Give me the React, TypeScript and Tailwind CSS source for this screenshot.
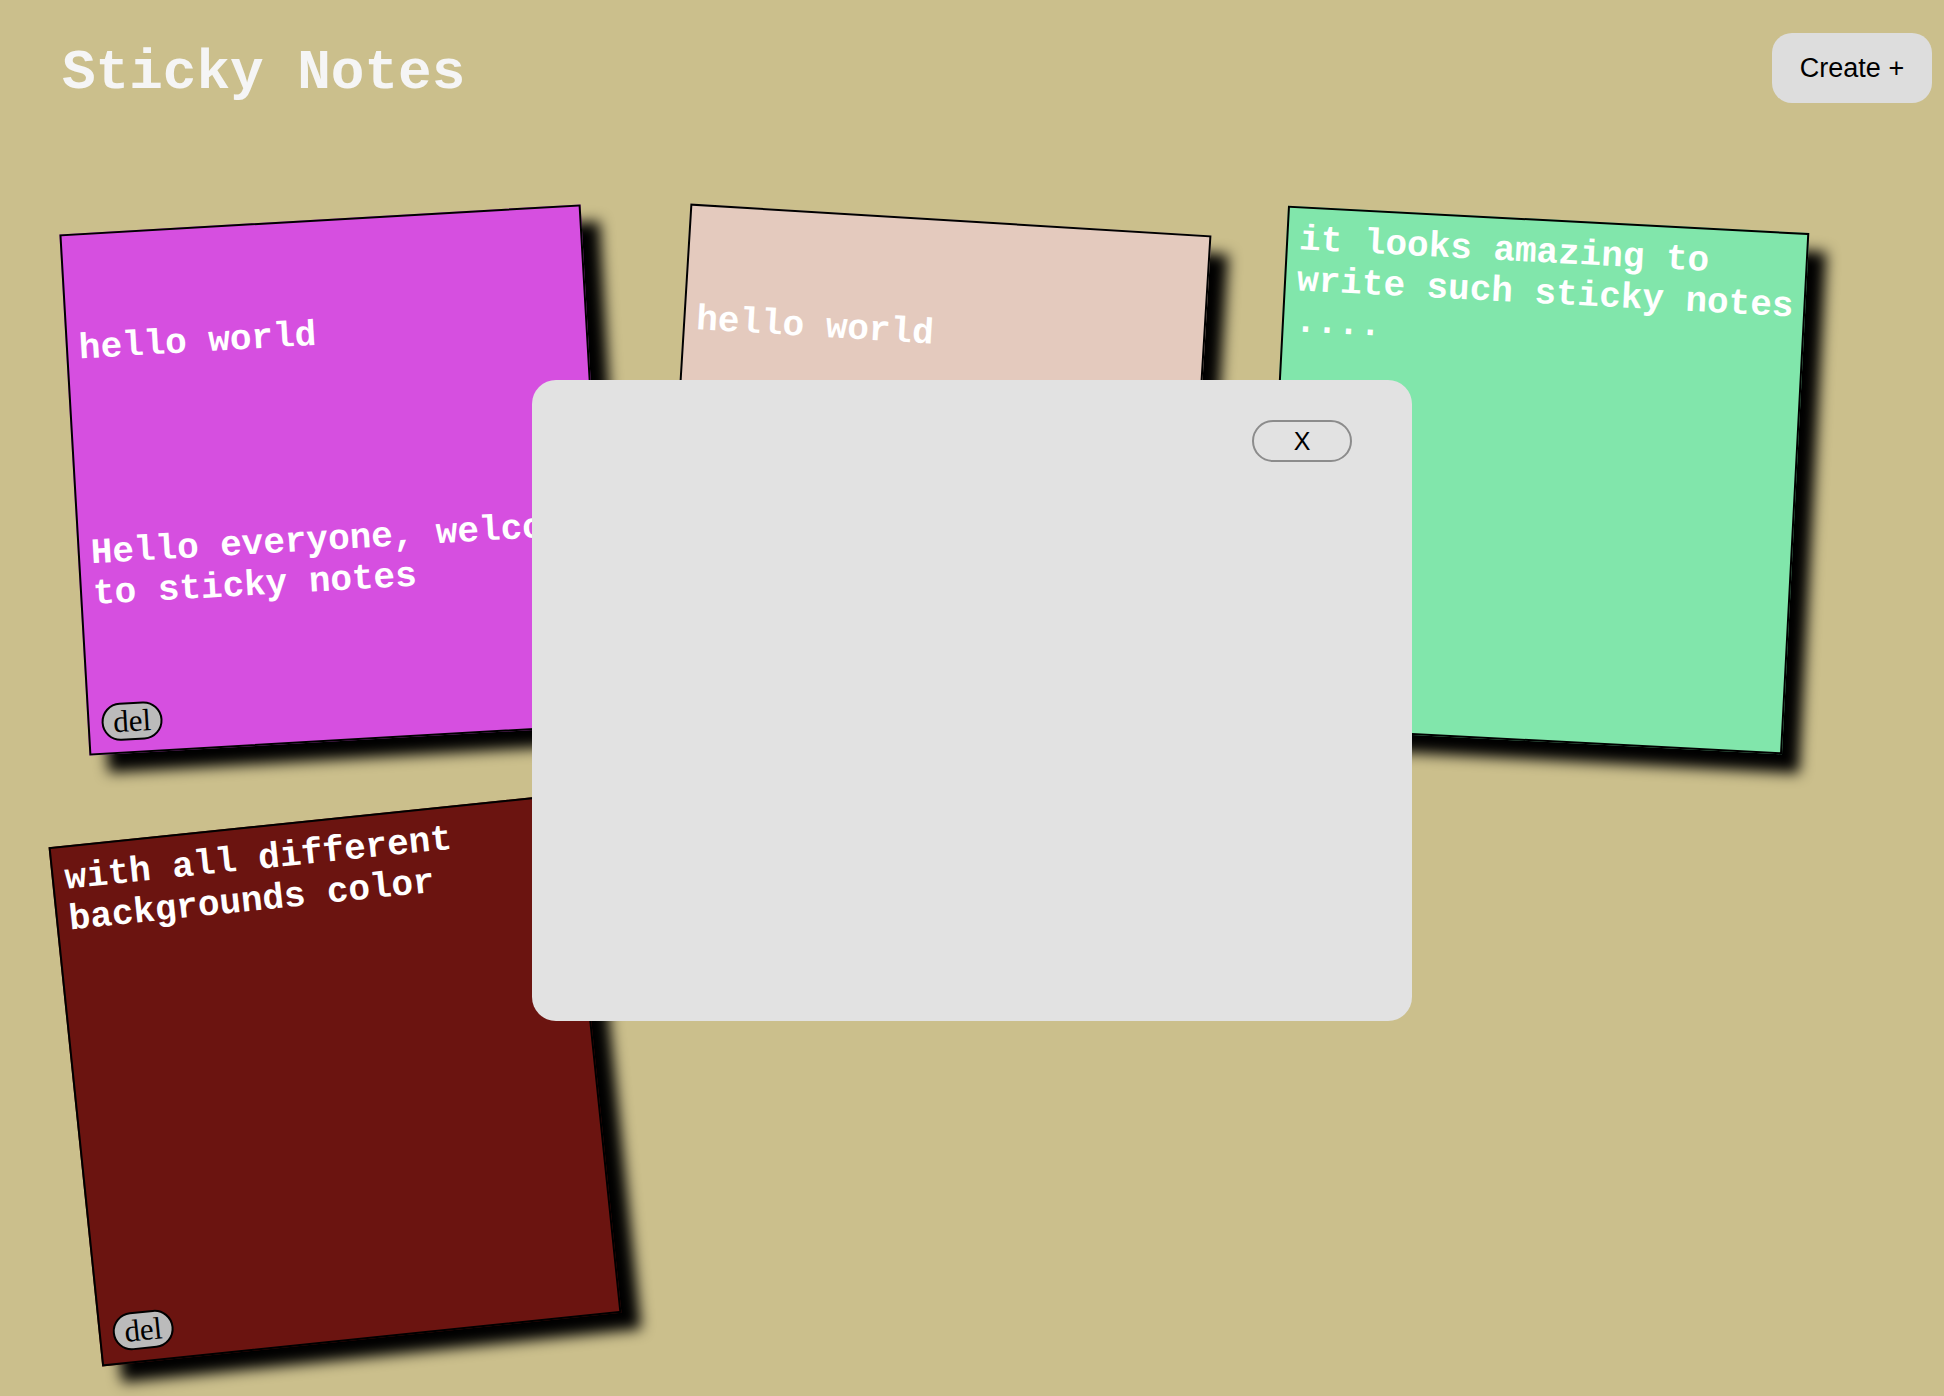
import React from "react";

type Note = { id: number; text: string; bg: string; rot: string };

const notes: Note[] = [
  {
    id: 1,
    text: "\n\nhello world\n\n\n\n\nHello everyone, welcome to sticky notes",
    bg: "bg-[#d64fe0]",
    rot: "rotate-[-3.3deg]",
  },
  { id: 2, text: "\n\nhello world", bg: "bg-[#e4cabe]", rot: "rotate-[3.5deg]" },
  {
    id: 3,
    text: "it looks amazing to write such sticky notes ....",
    bg: "bg-[#81e6ab]",
    rot: "rotate-[3deg]",
  },
  {
    id: 4,
    text: "with all different backgrounds color",
    bg: "bg-[#6b1410]",
    rot: "rotate-[-5.9deg]",
  },
];

function StickyNote({ note }: { note: Note }) {
  return (
    <div
      className={`box-border flex h-[522px] w-[522px] flex-col border-2 border-black pt-[11px] pb-[11px] pl-[11px] pr-[10px] shadow-[18px_18px_14px_#000] ${note.bg} ${note.rot}`}
    >
      <div className="flex-1 whitespace-pre-wrap break-words font-['Liberation_Mono','Courier_New',Courier,monospace] text-[36px] font-bold leading-[41px] text-white">
        {note.text}
      </div>
      <button className="ml-[1px] box-border h-[38px] w-[61px] self-start rounded-full border-2 border-black bg-[#bbbbbb] p-0 font-['Liberation_Serif','Times_New_Roman',serif] text-[31px] leading-[34px] text-black">
        del
      </button>
    </div>
  );
}

export default function App() {
  return (
    <div className="relative min-h-screen w-full overflow-hidden bg-[#cbbf8c]">
      <header className="flex h-[105px] items-start justify-between">
        <h1 className="ml-[62px] mt-[41px] font-['Liberation_Mono','Courier_New',Courier,monospace] text-[56px] font-bold leading-[64px] text-[#f5f5f5]">
          Sticky Notes
        </h1>
        <button className="mr-[12px] mt-[33px] h-[70px] w-[160px] rounded-[20px] bg-[#dddddd] font-['Liberation_Sans',Arial,sans-serif] text-[27px] text-black">
          Create +
        </button>
      </header>

      <main className="flex flex-wrap gap-[78px] pb-[60px] pl-[74px] pt-[114px]">
        {notes.map((n) => (
          <StickyNote key={n.id} note={n} />
        ))}
      </main>

      <div className="absolute inset-0 flex items-start justify-center pt-[380px]">
        <div className="relative h-[641px] w-[880px] rounded-[24px] bg-[#e2e2e2]">
          <button className="absolute right-[60px] top-[40px] box-border h-[42px] w-[100px] rounded-full border-2 border-[#8c8c8c] bg-[#e2e2e2] font-['Liberation_Sans',Arial,sans-serif] text-[25px] leading-none text-black">
            X
          </button>
        </div>
      </div>
    </div>
  );
}
